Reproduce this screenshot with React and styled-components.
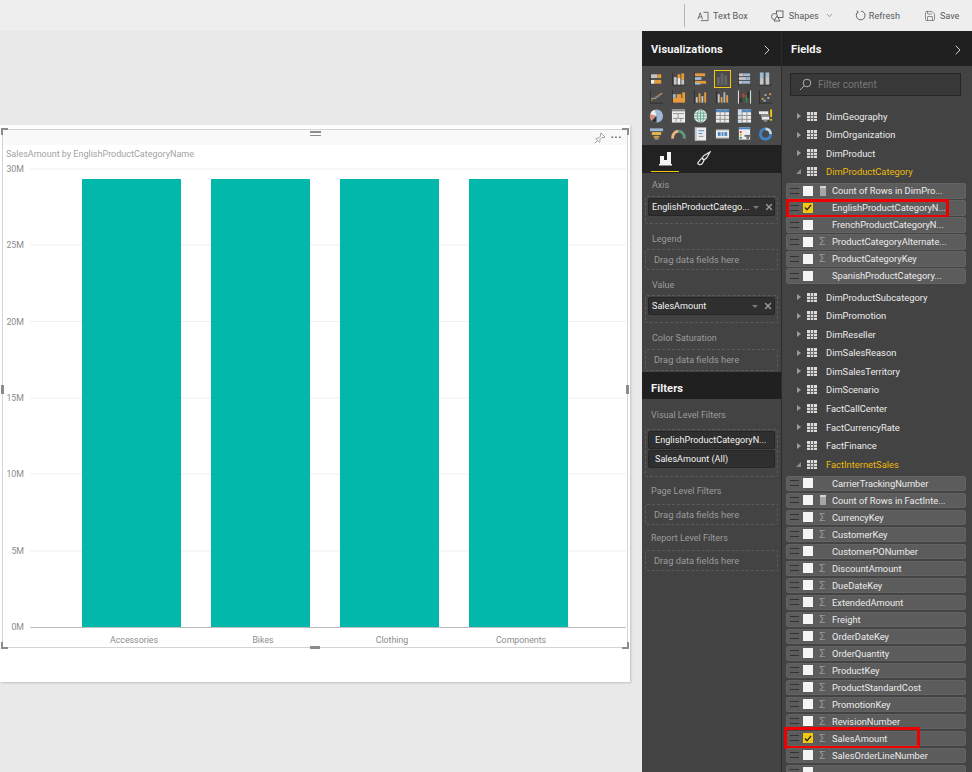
import React from 'react';
import styled, { createGlobalStyle } from 'styled-components';
import { ChevronRight, ChevronDown, Save, X } from 'lucide-react';

const FONT = 'Roboto, "Open Sans", "Liberation Sans", sans-serif';

const GlobalStyle = createGlobalStyle`
  html, body {
    margin: 0;
    padding: 0;
    height: 772px;
    overflow: hidden;
    background: #e9e9e9;
    font-family: ${FONT};
  }
`;

const Page = styled.div`
  width: 972px;
  height: 772px;
  display: flex;
  flex-direction: column;
  overflow: hidden;
`;

/* toolbar */
const Toolbar = styled.div`
  height: 31px;
  flex: none;
  display: flex;
  align-items: center;
  background: #eeeeee;
  padding-left: 684px;
  box-sizing: border-box;
`;

const ToolbarDivider = styled.div`
  width: 1px;
  height: 23px;
  background: #b4b4b4;
  margin-right: 12px;
`;

const ToolButton = styled.div`
  display: flex;
  align-items: center;
  gap: ${(p) => p.$gap || 5}px;
  margin-right: ${(p) => p.$after || 0}px;
  font-size: 9.1px;
  color: #5a5a5a;
  white-space: nowrap;
`;

const Main = styled.div`
  flex: 1;
  display: flex;
  min-height: 0;
`;

/* canvas and visual */
const Canvas = styled.div`
  width: 642px;
  flex: none;
  padding-top: 94px;
  box-sizing: border-box;
`;

const VisualCard = styled.div`
  width: 630px;
  height: 557px;
  background: #ffffff;
  box-shadow: 1px 1px 2px rgba(0, 0, 0, 0.18);
  padding-top: 4px;
  box-sizing: border-box;
`;

const VisualFrame = styled.div`
  position: relative;
  margin: 0 2px;
  height: 519px;
  border: 1px solid #d4d4d4;
  box-sizing: border-box;
`;

const VisualHeader = styled.div`
  height: 15px;
  background: #f9f9f9;
  display: flex;
  justify-content: flex-end;
  align-items: center;
  gap: 5px;
  padding-right: 5px;
`;

const Dots = styled.div`
  font-size: 11px;
  letter-spacing: 0.5px;
  line-height: 8px;
  height: 8px;
  color: #666;
  font-weight: 700;
`;

const VisualTitle = styled.div`
  padding: 2px 0 0 3px;
  height: 13px;
  font-size: 9px;
  line-height: 15px;
  color: #a3a3a3;
`;

const ChartSvg = styled.svg`
  display: block;
  margin-left: -3px;
`;

const Handle = styled.div`
  position: absolute;
  background: #8c8c8c;
  width: ${(p) => p.$w}px;
  height: ${(p) => p.$h}px;
  left: ${(p) => (p.$x === undefined ? 'auto' : `${p.$x}px`)};
  right: ${(p) => (p.$r === undefined ? 'auto' : `${p.$r}px`)};
  top: ${(p) => (p.$y === undefined ? 'auto' : `${p.$y}px`)};
  bottom: ${(p) => (p.$b === undefined ? 'auto' : `${p.$b}px`)};
`;

/* dark side panels */
const VizPanel = styled.div`
  width: 140px;
  flex: none;
  background: #434343;
  display: flex;
  flex-direction: column;
  border-right: 1px solid #2c2c2c;
  box-sizing: border-box;
`;

const FieldsPanel = styled.div`
  flex: 1;
  background: #434343;
  display: flex;
  flex-direction: column;
  overflow: hidden;
`;

const PanelHeader = styled.div`
  height: ${(p) => p.$h || 35}px;
  flex: none;
  background: #202020;
  color: #f4f4f4;
  display: flex;
  align-items: center;
  justify-content: space-between;
  padding: ${(p) => p.$top ?? 2}px 6px 0 ${(p) => p.$left || 9}px;
  margin-top: ${(p) => p.$gap || 0}px;
  font-size: 11.1px;
  font-weight: 700;
  letter-spacing: 0.1px;
  box-sizing: border-box;
`;

const IconGrid = styled.div`
  display: grid;
  grid-template-columns: repeat(6, 21.8px);
  grid-auto-rows: 18.4px;
  height: 79px;
  padding: 4px 0 0 4px;
  box-sizing: border-box;
  background: #4a4a4a;
`;

const IconCell = styled.div`
  width: 17px;
  height: 18px;
  justify-self: center;
  display: flex;
  align-items: center;
  justify-content: center;
  box-sizing: border-box;
  border: 1px solid ${(p) => (p.$selected ? '#f2c811' : 'transparent')};
`;

const TabRow = styled.div`
  height: 28px;
  flex: none;
  background: #222222;
  display: flex;
  align-items: flex-start;
  padding-left: 9px;
  gap: 10px;
`;

const Tab = styled.div`
  width: 28px;
  height: 27px;
  display: flex;
  align-items: center;
  justify-content: center;
  box-sizing: border-box;
  border-bottom: 1px solid ${(p) => (p.$active ? '#f2c811' : 'transparent')};
`;

const WellSection = styled.div`
  padding: 3px 3px 0;
  flex: none;
`;

const WellLabel = styled.div`
  height: ${(p) => p.$h || 14}px;
  line-height: ${(p) => p.$h || 14}px;
  font-size: 9px;
  color: #9c9c9c;
  padding-left: ${(p) => p.$pad ?? 7}px;
  margin-top: ${(p) => p.$top || 0}px;
`;

const Well = styled.div`
  border: 1px dashed #5b5b5b;
  border-radius: 2px;
  height: ${(p) => p.$h}px;
  padding: ${(p) => (p.$filled ? '1px 2px' : '0 8px')};
  display: flex;
  flex-direction: column;
  gap: 1px;
  font-size: 9.3px;
  line-height: ${(p) => (p.$filled ? 'normal' : `${p.$h - 2}px`)};
  color: #9c9c9c;
  box-sizing: border-box;
  margin-top: ${(p) => p.$top ?? 3}px;
`;

const Pill = styled.div`
  height: 18px;
  flex: none;
  background: #2f2f2f;
  border: 1px solid #262626;
  border-radius: 2px;
  color: #f2f2f2;
  font-size: 9.1px;
  display: flex;
  align-items: center;
  padding: 0 1px 0 ${(p) => p.$pad || 3}px;
  box-sizing: border-box;
  white-space: nowrap;
`;

const PillText = styled.span`
  flex: 1;
  white-space: nowrap;
`;

const PillCaret = styled.span`
  flex: none;
  width: 0;
  height: 0;
  border: 3px solid transparent;
  border-top: 3px solid #7a7a7a;
  border-bottom: 0;
  margin: 0 5px 0 4px;
`;

/* fields tree */
const SearchBox = styled.div`
  height: 23px;
  margin: 7px 11px 0 8px;
  flex: none;
  background: #383838;
  border: 1px solid #252525;
  display: flex;
  align-items: center;
  gap: 6px;
  padding-left: 8px;
  font-size: 10px;
  color: #777;
  box-sizing: border-box;
`;

const TreeList = styled.div`
  margin-top: 10.75px;
`;

const TreeRow = styled.div`
  height: 18.55px;
  display: flex;
  align-items: center;
  font-size: 9.35px;
  color: ${(p) => (p.$open ? '#edb90d' : '#ececec')};
  padding-left: 14px;
`;

const Caret = styled.span`
  width: 0;
  height: 0;
  margin-right: 6px;
  flex: none;
  ${(p) =>
    p.$open
      ? `border-bottom: 5px solid #8a8a8a; border-left: 5px solid transparent;`
      : `border-left: 4px solid #9a9a9a; border-top: 3.5px solid transparent; border-bottom: 3.5px solid transparent; margin-left: 1px;`}
`;

const TableIcon = styled.span`
  width: 10px;
  height: 9px;
  flex: none;
  margin-right: 9px;
  background-color: #dcdcdc;
  background-image: linear-gradient(#6a6a6a, #6a6a6a), linear-gradient(#6a6a6a, #6a6a6a),
    linear-gradient(#6a6a6a, #6a6a6a), linear-gradient(#6a6a6a, #6a6a6a);
  background-repeat: no-repeat;
  background-size: 1px 100%, 1px 100%, 100% 1px, 100% 1px;
  background-position: 3px 0, 6px 0, 0 3px, 0 6px;
`;

const FieldGroup = styled.div`
  padding: 2.25px 6px 2.75px 4px;
`;

const FieldRow = styled.div`
  position: relative;
  height: 15.5px;
  margin-bottom: 1.5px;
  display: flex;
  align-items: center;
  background: #5c5c5c;
  border: 1px solid #636363;
  border-radius: 2px;
  box-sizing: border-box;
  font-size: 9.3px;
  color: #ececec;
  white-space: nowrap;
`;

const Grip = styled.span`
  width: 9px;
  height: 4px;
  margin: 0 4px 0 3px;
  flex: none;
  border-top: 1px solid #333;
  border-bottom: 1px solid #333;
`;

const CheckBox = styled.span`
  width: 10px;
  height: 10px;
  flex: none;
  background: ${(p) => (p.$checked ? '#f2c811' : '#f4f4f4')};
  display: flex;
  align-items: center;
  justify-content: center;
  margin-right: 5px;
`;

const TypeSlot = styled.span`
  width: 9px;
  height: 11px;
  margin-right: 5px;
  flex: none;
  display: flex;
  align-items: center;
  justify-content: center;
  color: #9a9a9a;
  font-size: 11px;
  line-height: 11px;
`;

const CalcIcon = styled.span`
  width: 6px;
  height: 10px;
  background: #a6a6a6;
  border-top: 2px solid #d4d4d4;
  box-sizing: border-box;
`;

const Highlight = styled.div`
  position: absolute;
  left: ${(p) => p.$left}px;
  top: ${(p) => p.$top}px;
  width: ${(p) => p.$w}px;
  height: ${(p) => p.$h}px;
  border: 3px solid #ee0000;
  box-sizing: border-box;
  pointer-events: none;
`;

const BAR_TEAL = '#01b8aa';
const GRID = [
  ['30M', 9],
  ['25M', 85],
  ['20M', 161.5],
  ['15M', 238],
  ['10M', 314],
  ['5M', 391],
];
const BARS = [
  ['Accessories', 82],
  ['Bikes', 211],
  ['Clothing', 340],
  ['Components', 469],
];

const ColumnChart = () => (
  <ChartSvg width="630" height="488" viewBox="0 0 630 488">
    {GRID.map(([label, y]) => (
      <g key={label}>
        <line x1="30" x2="626" y1={y} y2={y} stroke="#efefef" />
        <text x="24" y={y + 3} textAnchor="end" fontSize="8.8" fontFamily={FONT} fill="#8c8c8c">
          {label}
        </text>
      </g>
    ))}
    {BARS.map(([label, x]) => (
      <g key={label}>
        <rect x={x} y="19" width="99" height="448" fill={BAR_TEAL} />
        <text x={x + 52} y="483" textAnchor="middle" fontSize="8.8" fontFamily={FONT} fill="#8c8c8c">
          {label}
        </text>
      </g>
    ))}
    <line x1="30" x2="626" y1="467.5" y2="467.5" stroke="#bdbdbd" />
    <text x="24" y="470" textAnchor="end" fontSize="8.8" fontFamily={FONT} fill="#8c8c8c">0M</text>
  </ChartSvg>
);

const O = '#e69a3a';
const B = '#9db9d3';
const D = '#2f2f2f';
const L = '#c4c4c4';
const W = '#ececec';
const G = '#8e8e8e';

// one small picture per visual type, as [x, y, w, h, colour]
const VIZ_ICONS = [
  [[1,2,1,12,D],[2,3,7,4,L],[9,3,4,4,O],[2,9,4,4,W],[6,9,7,4,O]],
  [[1,14,14,1,D],[1,2,1,12,D],[3,6,3,8,L],[7,3,3,4,O],[7,7,3,7,W],[11,2,3,7,O],[11,9,3,5,L]],
  [[1,1,1,14,D],[2,2,11,3,O],[2,6,7,3,B],[2,10,12,3,O],[2,12,6,2,B]],
  [[1,14,14,1,'#555'],[2,6,3,8,'#666'],[6,2,3,12,'#666'],[10,4,3,10,'#666']],
  [[1,1,1,14,D],[2,2,5,3,L],[7,2,7,3,B],[2,6,8,3,L],[10,6,4,3,B],[2,10,4,3,L],[6,10,8,3,B]],
  [[1,14,14,1,D],[2,1,4,6,B],[2,7,4,7,L],[8,1,4,4,B],[8,5,4,9,L]],
  [[1,14,14,1,D],[1,1,1,13,D]],
  [[1,1,1,14,D],[2,9,13,5,O],[6,5,5,4,O],[12,3,3,6,O],[2,5,3,4,B]],
  [[1,1,1,14,D],[3,8,2,6,L],[6,4,2,10,O],[9,7,2,7,L],[12,3,2,11,O]],
  [[1,1,1,14,D],[3,5,2,9,L],[6,8,2,6,O],[9,3,2,11,B],[12,6,2,8,O]],
  [[1,1,1,14,W],[14,1,1,14,W],[3,9,2,5,D],[6,4,2,5,'#d33'],[9,6,2,8,'#2a8a4a'],[11,2,2,7,D]],
  [[1,1,1,14,D],[1,14,14,1,D],[4,9,2,2,O],[7,5,2,2,B],[10,8,2,2,B],[12,4,2,2,O],[6,11,2,2,B]],
  null,
  [[1,1,14,14,W],[2,5,12,1,G],[7,5,1,5,G],[2,10,12,1,G],[5,10,1,4,G],[10,10,1,4,G],[1,1,14,2,'#888']],
  null,
  [[1,1,14,14,W],[1,1,14,3,'#4a86c6'],[5,1,1,14,G],[10,1,1,14,G],[1,7,14,1,G],[1,11,14,1,G]],
  [[1,1,14,14,W],[1,1,14,3,'#4a86c6'],[1,1,4,14,'#cfdcea'],[5,1,1,14,G],[10,1,1,14,G],[1,7,14,1,G],[1,11,14,1,G]],
  [[1,3,10,3,W],[3,6,9,3,G],[4,9,8,3,W],[6,12,4,2,G],[13,1,2,8,'#f2c811'],[13,11,2,2,'#f2c811']],
  [[1,2,14,3,B],[3,6,10,3,'#e6b94a'],[5,10,6,2,O],[6,12,4,2,'#999']],
  null,
  [[2,1,12,14,W],[2,1,2,14,'#b8c8d8'],[6,4,6,1,'#4a86c6'],[6,7,4,1,'#4a86c6'],[6,10,5,1,G]],
  [[1,3,14,10,W],[1,3,14,1,'#777'],[1,12,14,1,'#777'],[3,6,3,4,'#4a86c6'],[7,6,2,4,'#4a86c6'],[10,6,3,4,'#4a86c6']],
  [[2,1,12,13,W],[2,1,12,2,'#4a86c6'],[3,5,2,2,'#d33'],[3,8,2,2,'#e6b94a'],[3,11,2,2,'#2a8a4a'],[8,9,7,2,'#666'],[10,11,3,2,'#666'],[11,13,1,2,'#666']],
  null,
];

const CUSTOM_ICONS = {
  6: (
    <>
      <path d="M2 12l3-3 2 1 3-4 4-2" stroke={O} fill="none" />
      <path d="M2 9l3 1 3-3 2 1 4-4" stroke="#7f9ab5" fill="none" />
    </>
  ),
  12: (
    <>
      <circle cx="8" cy="8" r="7" fill={B} />
      <path d="M8 8L1.2 6A7 7 0 0 1 6 1.3z" fill={W} />
      <path d="M8 8L1.2 6A7 7 0 0 0 3 13z" fill="#d98a7a" />
      <path d="M8 8L3 13a7 7 0 0 0 5 2z" fill={D} />
    </>
  ),
  14: (
    <>
      <circle cx="8" cy="8" r="7" fill={W} />
      <path d="M1 8h14M2 5h12M2 11h12M8 1v14" stroke="#5fa890" fill="none" />
      <ellipse cx="8" cy="8" rx="3.5" ry="7" stroke="#5fa890" fill="none" />
    </>
  ),
  19: (
    <>
      <path d="M2 13A6.5 6.5 0 0 1 8 5" stroke="#e6b980" strokeWidth="3" fill="none" />
      <path d="M8 5A6.5 6.5 0 0 1 14 13" stroke="#5f9a80" strokeWidth="3" fill="none" />
    </>
  ),
  23: (
    <>
      <circle cx="8" cy="8" r="5.5" stroke="#3f83c4" strokeWidth="3" fill="none" />
      <path d="M8 2.5A5.5 5.5 0 0 1 13.5 8" stroke="#c9d6e2" strokeWidth="3" fill="none" />
    </>
  ),
};

const VizIcon = ({ index }) => (
  <svg width="16" height="16" viewBox="0 0 16 16">
    {(VIZ_ICONS[index] || []).map(([x, y, w, h, c], i) => (
      <rect key={i} x={x} y={y} width={w} height={h} fill={c} />
    ))}
    {CUSTOM_ICONS[index]}
  </svg>
);

const TextBoxIcon = () => (
  <svg width="12" height="12" viewBox="0 0 13 12" fill="none" stroke="#5a5a5a" strokeWidth="0.9">
    <path d="M1 9.5L3.5 2.5L6 9.5M2 7h3" />
    <path d="M7 2h5v9H4" />
  </svg>
);

const ShapesIcon = () => (
  <svg width="13" height="12" viewBox="0 0 13 12" fill="none" stroke="#5a5a5a" strokeWidth="0.9">
    <rect x="5.5" y="1" width="6.5" height="6.5" />
    <circle cx="3.5" cy="6.5" r="3" fill="#eee" />
    <path d="M6 6l3 5H3z" fill="#eee" />
  </svg>
);

const RefreshIcon = () => (
  <svg width="11" height="11" viewBox="0 0 11 11" fill="none" stroke="#5a5a5a" strokeWidth="0.9">
    <path d="M3 2A4.4 4.4 0 1 0 6 1.1" />
    <path d="M1.8 0.6L3.3 2.2L1.6 3.4" />
  </svg>
);

const PinIcon = () => (
  <svg width="12" height="12" viewBox="0 0 12 12" fill="none" stroke="#8d8d8d" strokeWidth="0.8">
    <path d="M7 1l4 4-1 .6-2-.2L5.9 7.6 6 9.6 5.2 10.4 1.8 6.8l.8-.8 2 .1L6.6 4 6.4 2z" />
    <path d="M3.2 8.8L0.8 11.2" />
  </svg>
);

const SearchIcon = () => (
  <svg width="13" height="13" viewBox="0 0 13 13" fill="none" stroke="#b0b0b0" strokeWidth="1">
    <circle cx="8" cy="5" r="3.8" />
    <path d="M5.2 7.8L1 12" />
  </svg>
);

const BuildIcon = () => (
  <svg width="15" height="16" viewBox="0 0 15 16">
    <rect x="1" y="14" width="13" height="1.5" fill="#f4f4f4" />
    <rect x="2" y="6" width="4" height="8" fill="#f4f4f4" />
    <rect x="6" y="10" width="3" height="4" fill="#f4f4f4" />
    <rect x="9" y="2" width="4" height="12" fill="#f4f4f4" />
  </svg>
);

const BrushIcon = () => (
  <svg width="15" height="15" viewBox="0 0 15 15" fill="none" stroke="#e4e4e4" strokeWidth="1.2">
    <path d="M14 1L8 4.5 6 7l2 2 2.5-2z" />
    <path d="M6 7.5C3.5 8 4 10 2.5 11 1.5 12 1.5 13 3 13.5c2 .5 4-1 5-4.5z" />
  </svg>
);

const Tick = () => (
  <svg width="8" height="7" viewBox="0 0 8 7" fill="none" stroke="#222" strokeWidth="1.3">
    <path d="M1 3.5L3 5.8L7 1" />
  </svg>
);

const FieldItem = ({ name, type, checked, highlight }) => (
  <FieldRow>
    <Grip />
    <CheckBox $checked={checked}>{checked && <Tick />}</CheckBox>
    <TypeSlot>
      {type === 'sum' && 'Σ'}
      {type === 'calc' && <CalcIcon />}
    </TypeSlot>
    {name}
    {highlight && (
      <Highlight $left={highlight.left} $top={highlight.top} $w={highlight.w} $h={highlight.h} />
    )}
  </FieldRow>
);

const TreeItem = ({ name, open }) => (
  <TreeRow $open={open}>
    <Caret $open={open} />
    <TableIcon />
    {name}
  </TreeRow>
);

const CATEGORY_FIELDS = [
  { name: 'Count of Rows in DimPro...', type: 'calc' },
  { name: 'EnglishProductCategoryN...', checked: true, highlight: { left: -1, top: -2, w: 163, h: 19 } },
  { name: 'FrenchProductCategoryN...' },
  { name: 'ProductCategoryAlternate...', type: 'sum' },
  { name: 'ProductCategoryKey', type: 'sum' },
  { name: 'SpanishProductCategory...' },
];

const MID_TABLES = [
  'DimProductSubcategory', 'DimPromotion', 'DimReseller', 'DimSalesReason', 'DimSalesTerritory',
  'DimScenario', 'FactCallCenter', 'FactCurrencyRate', 'FactFinance',
];

const SALES_FIELDS = [
  { name: 'CarrierTrackingNumber' },
  { name: 'Count of Rows in FactInte...', type: 'calc' },
  { name: 'CurrencyKey', type: 'sum' },
  { name: 'CustomerKey', type: 'sum' },
  { name: 'CustomerPONumber' },
  { name: 'DiscountAmount', type: 'sum' },
  { name: 'DueDateKey', type: 'sum' },
  { name: 'ExtendedAmount', type: 'sum' },
  { name: 'Freight', type: 'sum' },
  { name: 'OrderDateKey', type: 'sum' },
  { name: 'OrderQuantity', type: 'sum' },
  { name: 'ProductKey', type: 'sum' },
  { name: 'ProductStandardCost', type: 'sum' },
  { name: 'PromotionKey', type: 'sum' },
  { name: 'RevisionNumber', type: 'sum' },
  { name: 'SalesAmount', type: 'sum', checked: true, highlight: { left: -3, top: -5, w: 136, h: 22 } },
  { name: 'SalesOrderLineNumber', type: 'sum' },
  { name: '' },
];

const RemovablePill = ({ children }) => (
  <Pill>
    <PillText>{children}</PillText>
    <PillCaret />
    <X size={10} color="#a0a0a0" strokeWidth={3} style={{ flex: 'none' }} />
  </Pill>
);

export default function App() {
  return (
    <Page>
      <GlobalStyle />
      <Toolbar>
        <ToolbarDivider />
        <ToolButton $after={23} $gap={4}><TextBoxIcon />Text Box</ToolButton>
        <ToolButton $after={6}><ShapesIcon />Shapes</ToolButton>
        <ToolButton $after={21}><ChevronDown size={9} strokeWidth={1.5} /></ToolButton>
        <ToolButton $after={24} $gap={3}><RefreshIcon />Refresh</ToolButton>
        <ToolButton $gap={4}><Save size={12} strokeWidth={1.3} />Save</ToolButton>
      </Toolbar>
      <Main>
        <Canvas>
          <VisualCard>
            <VisualFrame>
              <VisualHeader>
                <PinIcon />
                <Dots>···</Dots>
              </VisualHeader>
              <VisualTitle>SalesAmount by EnglishProductCategoryName</VisualTitle>
              <ColumnChart />
              <Handle $x={-2} $y={-2} $w={7} $h={2} />
              <Handle $x={-2} $y={-2} $w={2} $h={7} />
              <Handle $r={-2} $y={-2} $w={7} $h={2} />
              <Handle $r={-2} $y={-2} $w={2} $h={7} />
              <Handle $x={-2} $b={-2} $w={7} $h={2} />
              <Handle $x={-2} $b={-2} $w={2} $h={7} />
              <Handle $r={-2} $b={-2} $w={7} $h={2} />
              <Handle $r={-2} $b={-2} $w={2} $h={7} />
              <Handle $x={307} $y={1} $w={11} $h={2} />
              <Handle $x={307} $y={5} $w={11} $h={1} />
              <Handle $x={307} $b={-2} $w={10} $h={3} />
              <Handle $x={-2} $y={255} $w={3} $h={9} />
              <Handle $r={-2} $y={255} $w={3} $h={9} />
            </VisualFrame>
          </VisualCard>
        </Canvas>

        <VizPanel>
          <PanelHeader>
            Visualizations
            <ChevronRight size={16} color="#dcdcdc" strokeWidth={1.4} />
          </PanelHeader>
          <IconGrid>
            {VIZ_ICONS.map((_, i) => (
              <IconCell key={i} $selected={i === 3}>
                <VizIcon index={i} />
              </IconCell>
            ))}
          </IconGrid>
          <TabRow>
            <Tab $active><BuildIcon /></Tab>
            <Tab><BrushIcon /></Tab>
          </TabRow>
          <WellSection>
            <WellLabel $top={2}>Axis</WellLabel>
            <Well $h={28} $filled $top={4}>
              <RemovablePill>EnglishProductCatego...</RemovablePill>
            </Well>
            <WellLabel $top={8}>Legend</WellLabel>
            <Well $h={21}>Drag data fields here</Well>
            <WellLabel $top={8}>Value</WellLabel>
            <Well $h={28} $filled>
              <RemovablePill>SalesAmount</RemovablePill>
            </Well>
            <WellLabel $top={8}>Color Saturation</WellLabel>
            <Well $h={22} $top={4}>Drag data fields here</Well>
          </WellSection>
          <PanelHeader $h={27} $top={5} $gap={1}>Filters</PanelHeader>
          <WellSection>
            <WellLabel $top={5} $h={17} $pad={6}>Visual Level Filters</WellLabel>
            <Well $h={48} $filled $top={5}>
              <Pill $pad={6}>EnglishProductCategoryN...</Pill>
              <Pill $pad={6}>SalesAmount (All)</Pill>
            </Well>
            <WellLabel $top={7} $pad={6}>Page Level Filters</WellLabel>
            <Well $h={21} $top={6}>Drag data fields here</Well>
            <WellLabel $top={6} $pad={6}>Report Level Filters</WellLabel>
            <Well $h={21} $top={5}>Drag data fields here</Well>
          </WellSection>
        </VizPanel>

        <FieldsPanel>
          <PanelHeader>
            Fields
            <ChevronRight size={16} color="#dcdcdc" strokeWidth={1.4} />
          </PanelHeader>
          <SearchBox>
            <SearchIcon />
            Filter content
          </SearchBox>
          <TreeList>
            <TreeItem name="DimGeography" />
            <TreeItem name="DimOrganization" />
            <TreeItem name="DimProduct" />
            <TreeItem name="DimProductCategory" open />
            <FieldGroup>
              {CATEGORY_FIELDS.map((f) => <FieldItem key={f.name} {...f} />)}
            </FieldGroup>
            {MID_TABLES.map((name) => <TreeItem key={name} name={name} />)}
            <TreeItem name="FactInternetSales" open />
            <FieldGroup>
              {SALES_FIELDS.map((f) => <FieldItem key={f.name} {...f} />)}
            </FieldGroup>
          </TreeList>
        </FieldsPanel>
      </Main>
    </Page>
  );
}
